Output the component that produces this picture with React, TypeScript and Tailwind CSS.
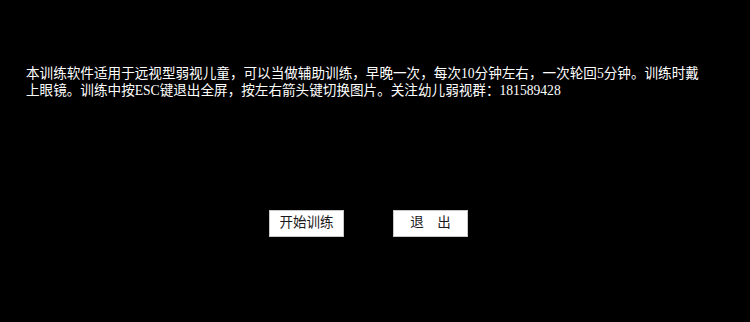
export default function App() {
  return (
    <div
      className="flex h-[322px] w-[750px] flex-col bg-black"
      style={{ fontFamily: '"Liberation Serif", "Noto Sans CJK SC", serif' }}
    >
      {/* Intro text */}
      <p className="mt-[66px] w-[711px] pl-[26px] text-[13.6px] leading-[16.5px] text-white">
        本训练软件适用于远视型弱视儿童，可以当做辅助训练，早晚一次，每次10分钟左右，一次轮回5分钟。训练时戴上眼镜。训练中按ESC键退出全屏，按左右箭头键切换图片。关注幼儿弱视群：181589428
      </p>

      {/* Buttons */}
      <div className="mt-[111px] flex justify-center gap-[49px] pr-[13px]">
        <button
          type="button"
          className="flex h-[27px] w-[75px] items-center justify-center border border-[#c8c8c8] bg-white text-[13.5px] text-[#1a1a1a]"
        >
          开始训练
        </button>
        <button
          type="button"
          className="flex h-[27px] w-[75px] items-center justify-center border border-[#c8c8c8] bg-white text-[13.5px] text-[#1a1a1a]"
        >
          退　出
        </button>
      </div>
    </div>
  );
}
